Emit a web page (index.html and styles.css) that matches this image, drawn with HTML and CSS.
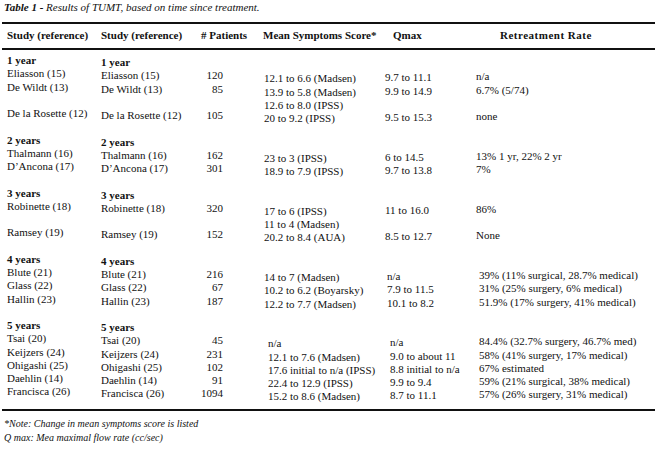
FILE: index.html
```html
<!DOCTYPE html>
<html>
<head>
<meta charset="utf-8">
<title>Table 1</title>
<link rel="stylesheet" href="styles.css">
</head>
<body>
<div class="page">
  <div class="caption"><b>Table 1 -</b> Results of TUMT, based on time since treatment.</div>
  <div class="rule"></div>
  <div class="thead">
    <div>Study (reference)</div>
    <div>Study (reference)</div>
    <div># Patients</div>
    <div>Mean Symptoms Score*</div>
    <div>Qmax</div>
    <div class="wide">Retreatment Rate</div>
  </div>
  <div class="rule"></div>
  <div class="tbody">
    <div class="group g1">
      <div class="c c1"><div class="lbl">1 year</div><div>Eliasson (15)</div><div>De Wildt (13)</div><div class="blank"></div><div>De la Rosette (12)</div></div>
      <div class="c c2"><div class="lbl">1 year</div><div>Eliasson (15)</div><div>De Wildt (13)</div><div class="blank"></div><div>De la Rosette (12)</div></div>
      <div class="c cp"><div class="blank"></div><div>120</div><div>85</div><div class="blank"></div><div>105</div></div>
      <div class="c cm"><div class="blank"></div><div>12.1 to 6.6 (Madsen)</div><div>13.9 to 5.8 (Madsen)</div><div>12.6 to 8.0 (IPSS)</div><div>20 to 9.2 (IPSS)</div></div>
      <div class="c cq"><div class="blank"></div><div>9.7 to 11.1</div><div>9.9 to 14.9</div><div class="blank"></div><div>9.5 to 15.3</div></div>
      <div class="c cr"><div class="blank"></div><div>n/a</div><div>6.7% (5/74)</div><div class="blank"></div><div>none</div></div>
    </div>
    <div class="group g2">
      <div class="c c1"><div class="lbl">2 years</div><div>Thalmann (16)</div><div>D’Ancona (17)</div></div>
      <div class="c c2"><div class="lbl">2 years</div><div>Thalmann (16)</div><div>D’Ancona (17)</div></div>
      <div class="c cp"><div class="blank"></div><div>162</div><div>301</div></div>
      <div class="c cm"><div class="blank"></div><div>23 to 3 (IPSS)</div><div>18.9 to 7.9 (IPSS)</div></div>
      <div class="c cq"><div class="blank"></div><div>6 to 14.5</div><div>9.7 to 13.8</div></div>
      <div class="c cr"><div class="blank"></div><div>13% 1 yr, 22% 2 yr</div><div>7%</div></div>
    </div>
    <div class="group g3">
      <div class="c c1"><div class="lbl">3 years</div><div>Robinette (18)</div><div class="blank"></div><div>Ramsey (19)</div></div>
      <div class="c c2"><div class="lbl">3 years</div><div>Robinette (18)</div><div class="blank"></div><div>Ramsey (19)</div></div>
      <div class="c cp"><div class="blank"></div><div>320</div><div class="blank"></div><div>152</div></div>
      <div class="c cm"><div class="blank"></div><div>17 to 6 (IPSS)</div><div>11 to 4 (Madsen)</div><div>20.2 to 8.4 (AUA)</div></div>
      <div class="c cq"><div class="blank"></div><div>11 to 16.0</div><div class="blank"></div><div>8.5 to 12.7</div></div>
      <div class="c cr"><div class="blank"></div><div>86%</div><div class="blank"></div><div>None</div></div>
    </div>
    <div class="group g4">
      <div class="c c1"><div class="lbl">4 years</div><div>Blute (21)</div><div>Glass (22)</div><div>Hallin (23)</div></div>
      <div class="c c2"><div class="lbl">4 years</div><div>Blute (21)</div><div>Glass (22)</div><div>Hallin (23)</div></div>
      <div class="c cp"><div class="blank"></div><div>216</div><div>67</div><div>187</div></div>
      <div class="c cm"><div class="blank"></div><div>14 to 7 (Madsen)</div><div>10.2 to 6.2 (Boyarsky)</div><div>12.2 to 7.7 (Madsen)</div></div>
      <div class="c cq"><div class="blank"></div><div>n/a</div><div>7.9 to 11.5</div><div>10.1 to 8.2</div></div>
      <div class="c cr"><div class="blank"></div><div>39% (11% surgical, 28.7% medical)</div><div>31% (25% surgery, 6% medical)</div><div>51.9% (17% surgery, 41% medical)</div></div>
    </div>
    <div class="group g5">
      <div class="c c1"><div class="lbl">5 years</div><div>Tsai (20)</div><div>Keijzers (24)</div><div>Ohigashi (25)</div><div>Daehlin (14)</div><div>Francisca (26)</div></div>
      <div class="c c2"><div class="lbl">5 years</div><div>Tsai (20)</div><div>Keijzers (24)</div><div>Ohigashi (25)</div><div>Daehlin (14)</div><div>Francisca (26)</div></div>
      <div class="c cp"><div class="blank"></div><div>45</div><div>231</div><div>102</div><div>91</div><div>1094</div></div>
      <div class="c cm"><div class="blank"></div><div>n/a</div><div>12.1 to 7.6 (Madsen)</div><div>17.6 initial to n/a (IPSS)</div><div>22.4 to 12.9 (IPSS)</div><div>15.2 to 8.6 (Madsen)</div></div>
      <div class="c cq"><div class="blank"></div><div>n/a</div><div>9.0 to about 11</div><div>8.8 initial to n/a</div><div>9.9 to 9.4</div><div>8.7 to 11.1</div></div>
      <div class="c cr"><div class="blank"></div><div>84.4% (32.7% surgery, 46.7% med)</div><div>58% (41% surgery, 17% medical)</div><div>67% estimated</div><div>59% (21% surgical, 38% medical)</div><div>57% (26% surgery, 31% medical)</div></div>
    </div>
  </div>
  <div class="rule bottom"></div>
  <div class="notes">
    <div>*Note: Change in mean symptoms score is listed</div>
    <div>Q max: Mea maximal flow rate (cc/sec)</div>
  </div>
</div>
</body>
</html>
```

FILE: styles.css
```css
html, body {
  margin: 0;
  padding: 0;
  background: #fff;
}
body {
  color: #111;
  font-family: "Liberation Serif", "Times New Roman", serif;
  font-size: 11px;
}
.page {
  width: 653px;
  margin-left: 2px;
}
.caption {
  font-style: italic;
  height: 15px;
  line-height: 15px;
  padding-left: 2px;
  white-space: nowrap;
}
.caption b {
  font-weight: bold;
}
.rule {
  height: 2px;
  background: #111;
}
.caption + .rule {
  margin-top: 7px;
}
.thead {
  display: grid;
  grid-template-columns: 99px 100px 62px 130px 107px 1fr;
  padding-left: 0;
  height: 24px;
  line-height: 22px;
  font-weight: bold;
  white-space: nowrap;
}
.thead > div:first-child {
  padding-left: 5px;
}
.thead .wide {
  letter-spacing: 0.5px;
}
.tbody {
  display: flex;
  flex-direction: column;
  gap: 8.25px;
  padding-top: 4px;
}
.group {
  display: grid;
  grid-template-columns: 99px 80px 42px 162px 87px 1fr;
  line-height: 13.25px;
  white-space: nowrap;
}
.c > div {
  height: 13.25px;
}
.lbl {
  font-weight: bold;
}
.c1 { padding-top: 0; padding-left: 5px; }
.c2 { padding-top: 2px; }
.cp { padding-top: 2px; text-align: right; }
.cm { padding-top: 5px; padding-left: 41px; }
.cq { padding-top: 4px; }
.cr { padding-top: 3px; padding-left: 4px; }
.g4 .cq { padding-left: 2px; }
.g5 .cq { padding-left: 5px; }
.g4 .cr, .g5 .cr { padding-left: 7px; }
.g5 .cm { padding-left: 45px; }
.rule.bottom {
  margin-top: 5px;
}
.notes {
  padding-top: 6px;
  padding-left: 2px;
  font-style: italic;
  font-size: 10px;
  line-height: 14px;
}
```
